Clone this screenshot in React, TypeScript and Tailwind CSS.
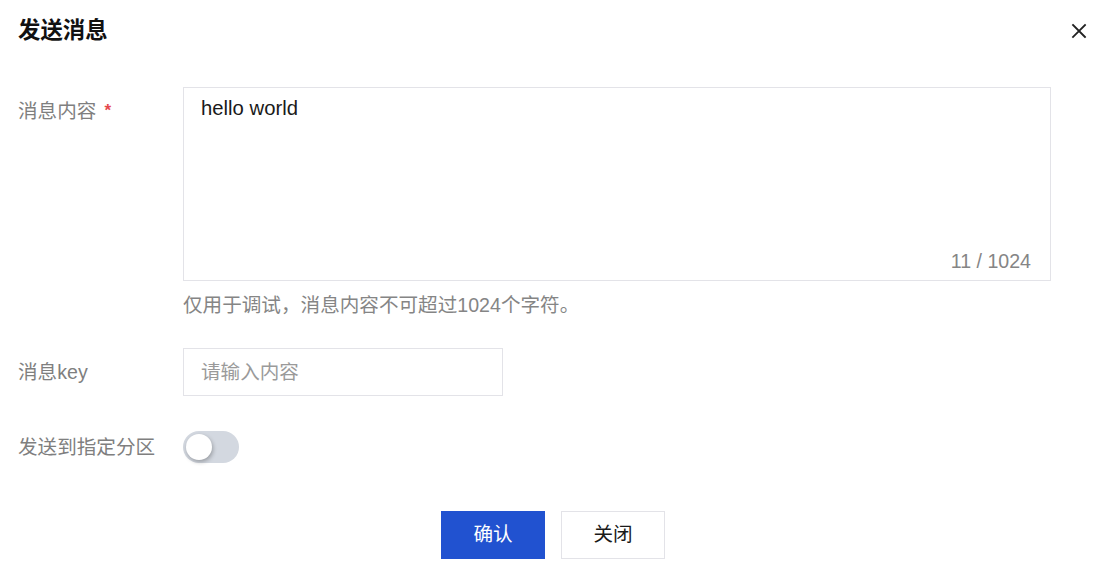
import { useState } from "react";

const FONT = '"Liberation Sans", "Noto Sans CJK SC", sans-serif';

function CloseIcon() {
  return (
    <svg width="16" height="16" viewBox="0 0 16 16" fill="none">
      <path d="M2 2l12 12M14 2L2 14" stroke="#222" strokeWidth="1.8" strokeLinecap="square" />
    </svg>
  );
}

function Toggle() {
  const [on, setOn] = useState(false);
  return (
    <button
      type="button"
      onClick={() => setOn(!on)}
      className={`flex h-[32px] w-[56px] items-center rounded-full p-[3px] ${on ? "bg-[#2152d0] justify-end" : "bg-[#d3d8e0] justify-start"}`}
    >
      <span className="block h-[26px] w-[26px] rounded-full bg-white shadow-[1px_2px_4px_rgba(0,0,0,0.28)]" />
    </button>
  );
}

export default function App() {
  const [msg, setMsg] = useState("hello world");

  return (
    <div className="h-[574px] w-[1100px] overflow-hidden bg-white text-[19.6px]" style={{ fontFamily: FONT }}>
      <div className="flex h-[62px] items-center justify-between pl-[18px] pr-[11px]">
        <h1 className="text-[22.4px] font-bold text-[#111]">发送消息</h1>
        <button type="button" className="flex h-[20px] w-[20px] items-center justify-center">
          <CloseIcon />
        </button>
      </div>

      <div className="mt-[25px] flex flex-col pl-[18px]">
        <div className="flex">
          <div className="flex w-[165px] items-center self-start pt-[10px] leading-[28px] text-[#7f7f7f]">
            消息内容
            <span className="ml-[8px] text-[17px] font-bold text-[#e5484d]">*</span>
          </div>
          <div className="flex flex-col">
            <div className="relative h-[194px] w-[868px] border border-[#e3e3e8]">
              <textarea
                value={msg}
                maxLength={1024}
                onChange={(e) => setMsg(e.target.value)}
                className="h-full w-full resize-none px-[17px] pt-[6px] text-[20.3px] leading-[28px] text-[#1a1a1a] outline-none"
              />
              <span className="absolute bottom-[5px] right-[19px] leading-[28px] text-[#858585]">
                {msg.length} / 1024
              </span>
            </div>
            <p className="mt-[10px] leading-[28px] text-[#858585]">仅用于调试，消息内容不可超过1024个字符。</p>
          </div>
        </div>

        <div className="mt-[29px] flex items-center">
          <div className="w-[165px] leading-[28px] text-[#7f7f7f]">消息key</div>
          <input
            placeholder="请输入内容"
            className="h-[48px] w-[320px] border border-[#e3e3e8] px-[17px] text-[#1a1a1a] outline-none placeholder:text-[#9a9a9a]"
          />
        </div>

        <div className="mt-[35px] flex items-center">
          <div className="w-[165px] leading-[28px] text-[#7f7f7f]">发送到指定分区</div>
          <Toggle />
        </div>
      </div>

      <div className="mt-[48px] flex justify-center gap-[16px] pl-[6px]">
        <button type="button" className="h-[48px] w-[104px] bg-[#2152d0] text-white">
          确认
        </button>
        <button type="button" className="h-[48px] w-[104px] border border-[#e3e3e8] bg-white text-[#1a1a1a]">
          关闭
        </button>
      </div>
    </div>
  );
}
